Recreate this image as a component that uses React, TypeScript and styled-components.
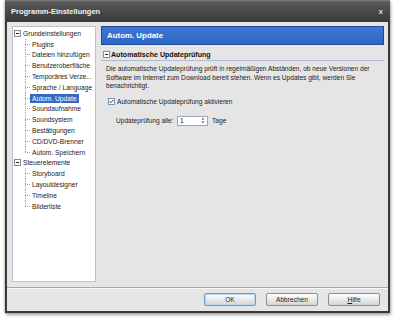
import styled, { createGlobalStyle } from "styled-components";

const GlobalStyle = createGlobalStyle`
  html, body {
    margin: 0;
    padding: 0;
    background: #ffffff;
  }
  body {
    font-family: "Liberation Sans", Arial, sans-serif;
    color: #1b1b1b;
  }
`;

const Page = styled.div`
  padding: 0 4px 6px 5px;
`;

const Window = styled.div`
  width: 385px;
  height: 313px;
  box-sizing: border-box;
  display: flex;
  flex-direction: column;
  background: #e5e5e5;
  border: 2px solid #3a3a3a;
  border-top: none;
  box-shadow: 1px 2px 3px rgba(0, 0, 0, 0.35), -1px 0 2px rgba(0, 0, 0, 0.2);
`;

const TitleBar = styled.div`
  height: 22px;
  margin: 0 -2px;
  padding: 0 7px 0 6px;
  display: flex;
  align-items: center;
  justify-content: space-between;
  background: linear-gradient(#808080 0, #5a5a5a 2px, #4a4a4a 50%, #3a3a3a 100%);
  color: #f2f2f2;
  font-size: 7.5px;
  font-weight: bold;
`;

const Close = styled.span`
  font-size: 8px;
  font-weight: bold;
  color: #d8d8d8;
`;

const Body = styled.div`
  display: flex;
  gap: 5px;
  padding: 4px 4px 0 5px;
`;

const Tree = styled.div`
  width: 84px;
  height: 256px;
  box-sizing: border-box;
  background: #ffffff;
  border: 1px solid #b8c4d2;
  padding-top: 1px;
  font-size: 6.7px;
`;

const TreeRow = styled.div<{ $child?: boolean }>`
  height: 10.8px;
  display: flex;
  align-items: stretch;
  padding-left: ${(p) => (p.$child ? "12px" : "1px")};
`;

const Expander = styled.svg`
  width: 7px;
  height: 7px;
  align-self: center;
  flex: none;
`;

const Branch = styled.span<{ $last?: boolean }>`
  width: 5px;
  flex: none;
  background:
    repeating-linear-gradient(to bottom, #a4a4a4 0 1px, transparent 1px 2px)
      left top / 1px ${(p) => (p.$last ? "50%" : "100%")} no-repeat,
    repeating-linear-gradient(to right, #a4a4a4 0 1px, transparent 1px 2px)
      left center / 100% 1px no-repeat;
`;

const Label = styled.span<{ $selected?: boolean }>`
  align-self: center;
  padding: 0 2px;
  line-height: 9px;
  white-space: nowrap;
  background: ${(p) => (p.$selected ? "#316ac5" : "transparent")};
  color: ${(p) => (p.$selected ? "#ffffff" : "#1b1b1b")};
`;

const Content = styled.div`
  flex: 1;
  display: flex;
  flex-direction: column;
`;

const Banner = styled.div`
  height: 19px;
  box-sizing: border-box;
  display: flex;
  align-items: center;
  padding-left: 5px;
  border: 1px solid #1d4a9c;
  background: linear-gradient(#3f78d3, #2e66c4);
  color: #ffffff;
  font-size: 7.9px;
  font-weight: bold;
`;

const SectionHeader = styled.div`
  margin-top: 4px;
  height: 12px;
  box-sizing: border-box;
  display: flex;
  align-items: center;
  gap: 1px;
  padding-left: 2px;
  border-bottom: 1px solid #aebbd0;
  font-size: 7.1px;
  font-weight: bold;
  color: #111111;
`;

const Paragraph = styled.p`
  margin: 4px 0 0 5px;
  font-size: 6.6px;
  line-height: 8.5px;
  white-space: nowrap;
`;

const CheckRow = styled.label`
  margin: 6px 0 0 7px;
  height: 9px;
  display: flex;
  align-items: center;
  gap: 2px;
  font-size: 6.6px;
`;

const CheckBox = styled.svg`
  width: 7px;
  height: 7px;
  flex: none;
`;

const SpinRow = styled.div`
  margin: 10px 0 0 15px;
  height: 10px;
  display: flex;
  align-items: center;
  font-size: 6.6px;
`;

const SpinLabel = styled.span`
  width: 61px;
  white-space: nowrap;
`;

const SpinBox = styled.div`
  width: 31px;
  height: 10px;
  box-sizing: border-box;
  display: flex;
  align-items: center;
  justify-content: space-between;
  padding: 0 2px 0 2px;
  background: #ffffff;
  border: 1px solid #9aa7b8;
  font-size: 6.6px;
`;

const SpinArrows = styled.svg`
  width: 4px;
  height: 7px;
`;

const Unit = styled.span`
  margin-left: 4px;
`;

const Separator = styled.div`
  margin-top: 5px;
  border-top: 1px solid #a9a9a9;
  border-bottom: 1px solid #f8f8f8;
`;

const Footer = styled.div`
  display: flex;
  justify-content: flex-end;
  gap: 10px;
  padding: 4px 8px 0;
`;

const Button = styled.button<{ $default?: boolean }>`
  width: 52px;
  height: 13px;
  padding: 0;
  box-sizing: border-box;
  border: 1px solid ${(p) => (p.$default ? "#6e9bd4" : "#8e8e8e")};
  border-radius: 2px;
  background: linear-gradient(#ffffff, #e9e9e9 50%, #d6d6d6);
  font-family: "Liberation Sans", Arial, sans-serif;
  font-size: 6.6px;
  color: #1b1b1b;
  box-shadow: ${(p) => (p.$default ? "inset 0 0 0 1px #b9d3f1" : "none")};
`;

const MinusBox = ({ color = "#8a8a8a" }: { color?: string }) => (
  <Expander viewBox="0 0 7 7">
    <rect x="0.5" y="0.5" width="6" height="6" fill="#fff" stroke={color} />
    <line x1="2" y1="3.5" x2="5" y2="3.5" stroke="#222" />
  </Expander>
);

const groups = [
  {
    title: "Grundeinstellungen",
    items: [
      "Plugins",
      "Dateien hinzufügen",
      "Benutzeroberfläche",
      "Temporäres Verze...",
      "Sprache / Language",
      "Autom. Update",
      "Soundaufnahme",
      "Soundsystem",
      "Bestätigungen",
      "CD/DVD-Brenner",
      "Autom. Speichern",
    ],
  },
  {
    title: "Steuerelemente",
    items: ["Storyboard", "Layoutdesigner", "Timeline", "Bilderliste"],
  },
];

export default function App() {
  return (
    <Page>
      <GlobalStyle />
      <Window>
        <TitleBar>
          <span>Programm-Einstellungen</span>
          <Close>x</Close>
        </TitleBar>
        <Body>
          <Tree>
            {groups.map((g) => (
              <div key={g.title}>
                <TreeRow>
                  <MinusBox />
                  <Label>{g.title}</Label>
                </TreeRow>
                {g.items.map((item, i) => (
                  <TreeRow $child key={item}>
                    <Branch $last={i === g.items.length - 1} />
                    <Label $selected={item === "Autom. Update"}>{item}</Label>
                  </TreeRow>
                ))}
              </div>
            ))}
          </Tree>
          <Content>
            <Banner>Autom. Update</Banner>
            <SectionHeader>
              <MinusBox color="#7d8fae" />
              <span>Automatische Updateprüfung</span>
            </SectionHeader>
            <Paragraph>
              Die automatische Updateprüfung prüft in regelmäßigen Abständen, ob neue Versionen der
              <br />
              Software im Internet zum Download bereit stehen. Wenn es Updates gibt, werden Sie
              <br />
              benachrichtigt.
            </Paragraph>
            <CheckRow>
              <CheckBox viewBox="0 0 7 7">
                <rect x="0.5" y="0.5" width="6" height="6" fill="#fff" stroke="#7d8fae" />
                <path d="M1.6 3.4 L2.9 4.8 L5.4 1.9" fill="none" stroke="#2a3f66" strokeWidth="1" />
              </CheckBox>
              <span>Automatische Updateprüfung aktivieren</span>
            </CheckRow>
            <SpinRow>
              <SpinLabel>Updateprüfung alle:</SpinLabel>
              <SpinBox>
                <span>1</span>
                <SpinArrows viewBox="0 0 4 7">
                  <path d="M0.5 2.5 L2 1 L3.5 2.5 Z" fill="#333" />
                  <path d="M0.5 4.5 L2 6 L3.5 4.5 Z" fill="#333" />
                </SpinArrows>
              </SpinBox>
              <Unit>Tage</Unit>
            </SpinRow>
          </Content>
        </Body>
        <Separator />
        <Footer>
          <Button $default>OK</Button>
          <Button>Abbrechen</Button>
          <Button>
            <u>H</u>ilfe
          </Button>
        </Footer>
      </Window>
    </Page>
  );
}
